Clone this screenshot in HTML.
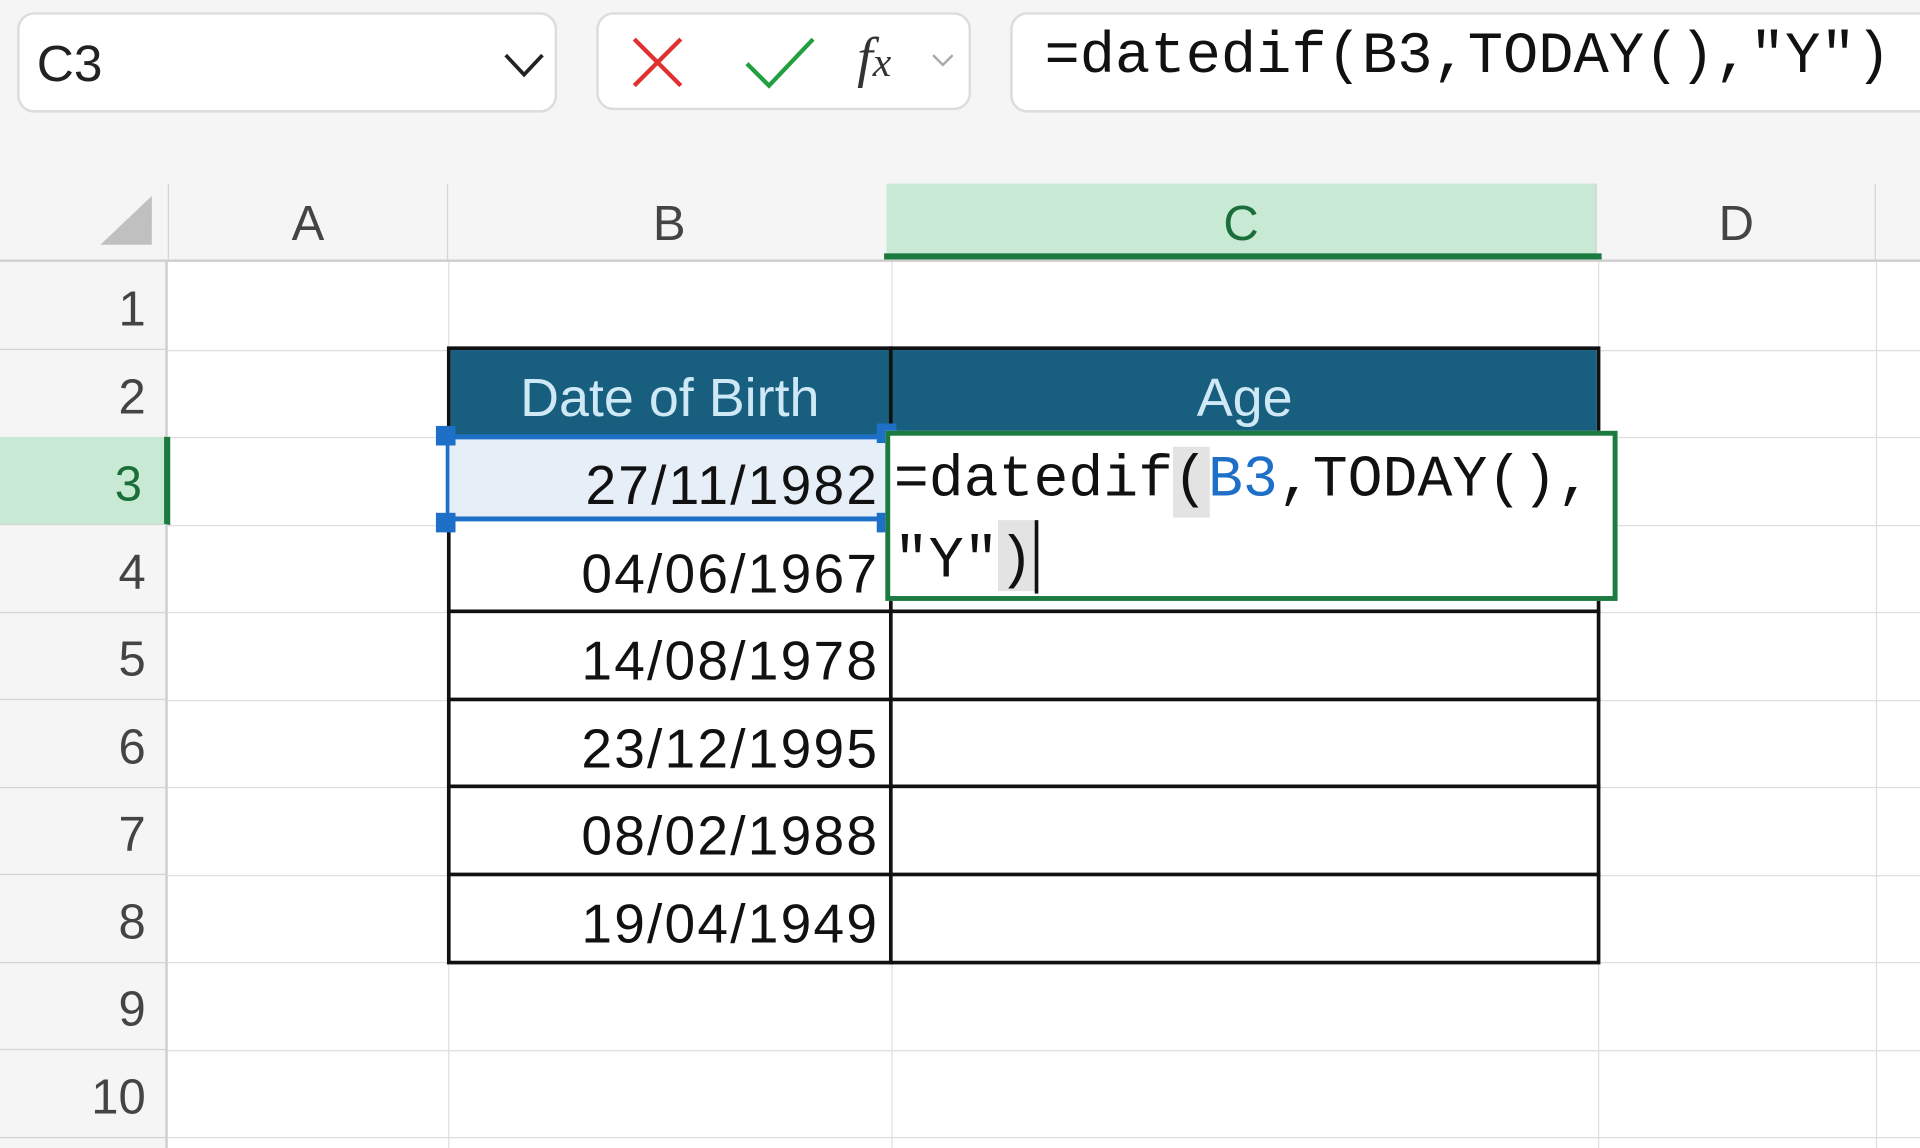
<!DOCTYPE html>
<html><head><meta charset="utf-8"><style>
html,body{margin:0;padding:0;width:1920px;height:1148px;overflow:hidden;background:#f5f5f5}
#w{position:absolute;left:0;top:0;width:1568px;height:938px;transform:scale(1.22449,1.22388);transform-origin:0 0;background:#f5f5f5;font-family:"Liberation Sans",sans-serif}
.a{position:absolute;box-sizing:border-box}
.box{background:#fff;border:2px solid #dcdcdc;border-radius:14px}
.col{top:150px;height:62px;font-size:40px;color:#444;text-align:center;line-height:66px;border-right:1px solid #d4d4d4}
.rh{left:0;width:137px;height:72px;font-size:40px;color:#444;text-align:right;padding-right:18px;line-height:78px;border-bottom:1px solid #d4d4d4}
.hl{left:137px;width:1431px;height:1px;background:#dedede}
.vl{top:214px;width:1px;height:724px;background:#dedede}
.d{left:366px;width:362px;height:71px;text-align:right;padding-right:10px;font-size:45px;letter-spacing:1.8px;line-height:80px;color:#111}
.m{font-family:"Liberation Mono",monospace}
</style></head><body><div id="w">
<div class="a box" style="left:14px;top:10px;width:441px;height:82px"></div>
<div class="a" style="left:30px;top:28px;font-size:42px;color:#222">C3</div>
<svg class="a" style="left:410px;top:40px" width="36" height="26"><path d="M3 5 L18 21 L33 5" stroke="#222" stroke-width="3" fill="none"/></svg>
<div class="a box" style="left:487px;top:10px;width:306px;height:80px"></div>
<svg class="a" style="left:512px;top:28px" width="50" height="46"><path d="M6 4 L44 42 M44 4 L6 42" stroke="#e03030" stroke-width="3.5" fill="none"/></svg>
<svg class="a" style="left:606px;top:28px" width="62" height="46"><path d="M4 24 L22 42 L58 4" stroke="#22a040" stroke-width="3.5" fill="none"/></svg>
<div class="a" style="left:700px;top:20px;font-size:46px;font-style:italic;font-family:'Liberation Serif',serif;color:#333">f<span style="font-size:34px">x</span></div>
<svg class="a" style="left:760px;top:42px" width="20" height="14"><path d="M2 3 L10 11 L18 3" stroke="#aaa" stroke-width="2" fill="none"/></svg>
<div class="a box" style="left:825px;top:10px;width:780px;height:82px;border-radius:14px"></div>
<div class="a m" style="left:853px;top:20px;font-size:48px;color:#111">=datedif(B3,TODAY(),"Y")</div>

<div class="a" style="left:0;top:214px;width:1568px;height:724px;background:#fff"></div>
<svg class="a" style="left:82px;top:160px" width="44" height="42"><path d="M42 0 L42 40 L0 40 Z" fill="#c0c0c0"/></svg>
<div class="a col" style="left:137px;width:229px;border-left:1px solid #d4d4d4">A</div>
<div class="a col" style="left:366px;width:362px">B</div>
<div class="a col" style="left:724px;width:580px;background:#c8e9d4;color:#1a6e3a">C</div>
<div class="a" style="left:722px;top:207px;width:586px;height:6px;background:#1a7a40"></div>
<div class="a col" style="left:1305px;width:227px">D</div>
<div class="a" style="left:0;top:212px;width:1568px;height:2px;background:#cfcfcf"></div>
<div class="a" style="left:0;top:214px;width:137px;height:724px;background:#f5f5f5;border-right:2px solid #cfcfcf"></div>

<div class="a hl" style="top:286px"></div><div class="a hl" style="top:357px"></div><div class="a hl" style="top:429px"></div><div class="a hl" style="top:500px"></div><div class="a hl" style="top:572px"></div><div class="a hl" style="top:643px"></div><div class="a hl" style="top:715px"></div><div class="a hl" style="top:786px"></div><div class="a hl" style="top:858px"></div><div class="a hl" style="top:929px"></div>
<div class="a vl" style="left:366px"></div><div class="a vl" style="left:728px"></div><div class="a vl" style="left:1305px"></div><div class="a vl" style="left:1532px"></div>

<div class="a rh" style="top:214px">1</div>
<div class="a rh" style="top:286px">2</div>
<div class="a rh" style="top:357px;background:#c8e9d4;color:#1a6e3a;border-right:5px solid #1a7a40;width:139px">3</div>
<div class="a rh" style="top:429px">4</div>
<div class="a rh" style="top:500px">5</div>
<div class="a rh" style="top:572px">6</div>
<div class="a rh" style="top:643px">7</div>
<div class="a rh" style="top:715px">8</div>
<div class="a rh" style="top:786px">9</div>
<div class="a rh" style="top:858px">10</div>

<div class="a" style="left:365px;top:283px;width:942px;height:505px;border:3px solid #111;background:#fff"></div>
<div class="a" style="left:368px;top:286px;width:936px;height:70px;background:#175e7f"></div>
<div class="a" style="left:366px;top:286px;width:362px;height:71px;text-align:center;font-size:44px;line-height:80px;color:#cfe8f5">Date of Birth</div>
<div class="a" style="left:728px;top:286px;width:577px;height:71px;text-align:center;font-size:44px;line-height:80px;color:#cfe8f5">Age</div>
<div class="a" style="left:365px;top:498px;width:942px;height:3px;background:#111"></div>
<div class="a" style="left:365px;top:570px;width:942px;height:3px;background:#111"></div>
<div class="a" style="left:365px;top:641px;width:942px;height:3px;background:#111"></div>
<div class="a" style="left:365px;top:713px;width:942px;height:3px;background:#111"></div>
<div class="a" style="left:726px;top:283px;width:3px;height:505px;background:#111"></div>

<div class="a" style="left:364px;top:355px;width:361px;height:71px;background:#e6eef8;border-top:4px solid #1e6fc8;border-bottom:4px solid #1e6fc8;border-left:3px solid #1e6fc8"></div>
<div class="a" style="left:356px;top:348px;width:16px;height:16px;background:#1e6fc8"></div>
<div class="a" style="left:356px;top:419px;width:16px;height:16px;background:#1e6fc8"></div>
<div class="a" style="left:716px;top:346px;width:16px;height:16px;background:#1e6fc8"></div>
<div class="a" style="left:716px;top:419px;width:16px;height:16px;background:#1e6fc8"></div>
<div class="a d" style="top:357px">27/11/1982</div>
<div class="a d" style="top:429px">04/06/1967</div>
<div class="a d" style="top:500px">14/08/1978</div>
<div class="a d" style="top:572px">23/12/1995</div>
<div class="a d" style="top:643px">08/02/1988</div>
<div class="a d" style="top:715px">19/04/1949</div>

<div class="a" style="left:723px;top:352px;width:598px;height:139px;background:#fff;border:4px solid #1a7a40"></div>
<div class="a" style="left:958px;top:365px;width:30px;height:58px;background:#e3e3e3"></div>
<div class="a" style="left:815px;top:425px;width:30px;height:58px;background:#e3e3e3"></div>
<div class="a m" style="left:730px;top:360px;font-size:47.5px;line-height:66px;color:#111;white-space:pre">=datedif(<span style="color:#1e6fc8">B3</span>,TODAY(),
"Y")</div>
<div class="a" style="left:845px;top:425px;width:3px;height:60px;background:#111"></div>
</div></body></html>
